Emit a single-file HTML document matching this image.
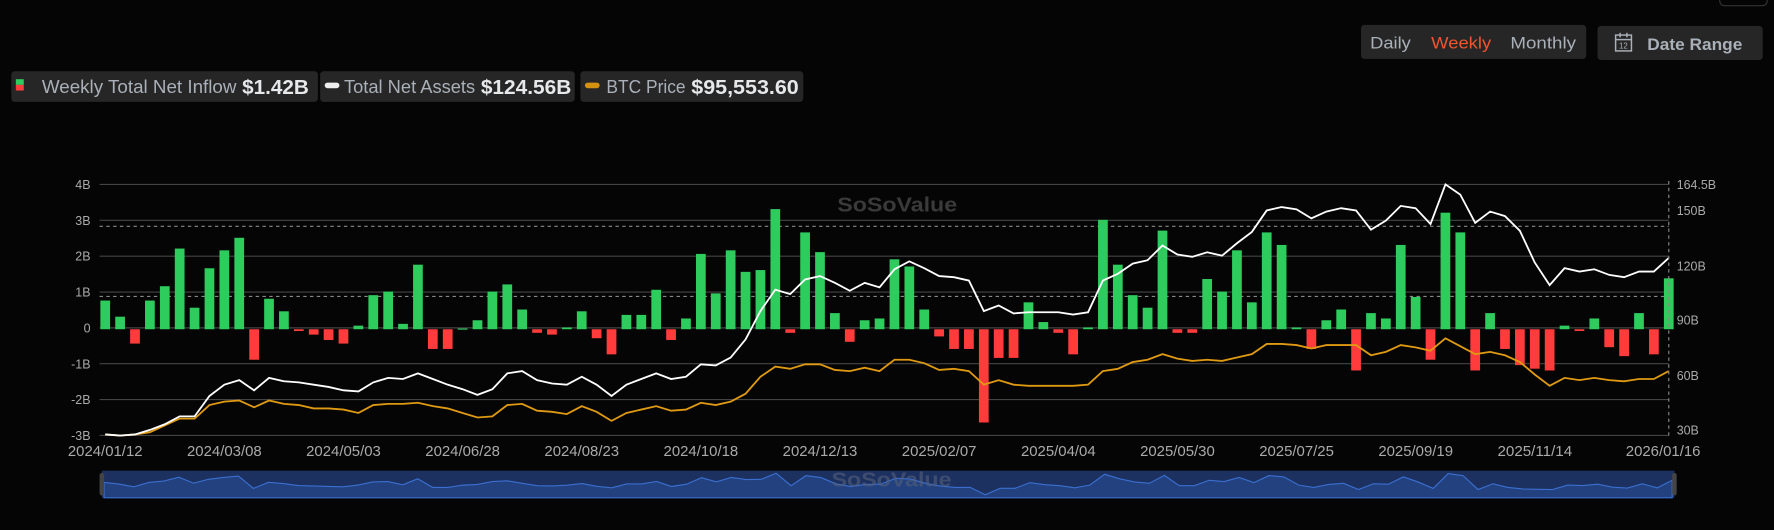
<!DOCTYPE html>
<html><head><meta charset="utf-8"><style>
html,body{margin:0;padding:0;background:#050505;width:1774px;height:530px;overflow:hidden}
svg{display:block}
text{font-family:"Liberation Sans",sans-serif}
</style></head><body>
<svg id="s" width="1774" height="530" viewBox="0 0 1568 468.45" xmlns="http://www.w3.org/2000/svg">
<rect width="1568" height="469" fill="#050505"/>
<rect x="1520" y="-10" width="42" height="15" rx="4" fill="none" stroke="#333"/>
<rect x="1203" y="22" width="199" height="30" rx="3" fill="#262626"/>
<text x="1211" y="43" font-size="15" fill="#aab0b8" textLength="36" lengthAdjust="spacingAndGlyphs">Daily</text>
<text x="1265" y="43" font-size="15" fill="#f2542d" textLength="53" lengthAdjust="spacingAndGlyphs">Weekly</text>
<text x="1335" y="43" font-size="15" fill="#aab0b8" textLength="58" lengthAdjust="spacingAndGlyphs">Monthly</text>
<rect x="1412" y="23" width="146" height="30" rx="3" fill="#262626"/>
<g stroke="#aab0b8" fill="none" stroke-width="1.3"><rect x="1428" y="31" width="14" height="14"/><line x1="1428" y1="35" x2="1442" y2="35"/><line x1="1432" y1="29" x2="1432" y2="33"/><line x1="1438" y1="29" x2="1438" y2="33"/></g>
<text x="1431" y="43" font-size="7" fill="#aab0b8">12</text>
<text x="1456" y="44" font-size="15" font-weight="bold" fill="#aab0b8" textLength="84" lengthAdjust="spacingAndGlyphs">Date Range</text>
<rect x="10" y="63" width="271" height="27" rx="3" fill="#262626"/>
<rect x="14" y="70" width="7" height="5" fill="#2dcc5c"/><rect x="14" y="75" width="7" height="5" fill="#ff3b3b"/>
<text x="37" y="82" font-size="16" fill="#aab0b8" textLength="172" lengthAdjust="spacingAndGlyphs">Weekly Total Net Inflow</text>
<text x="214" y="83" font-size="18" font-weight="bold" fill="#e6e8ea" textLength="59" lengthAdjust="spacingAndGlyphs">$1.42B</text>
<rect x="283" y="63" width="225" height="27" rx="3" fill="#262626"/>
<rect x="287" y="73" width="13" height="5" rx="2.5" fill="#eee"/>
<text x="304" y="82" font-size="16" fill="#aab0b8" textLength="116" lengthAdjust="spacingAndGlyphs">Total Net Assets</text>
<text x="425" y="83" font-size="18" font-weight="bold" fill="#e6e8ea" textLength="80" lengthAdjust="spacingAndGlyphs">$124.56B</text>
<rect x="513" y="63" width="197" height="27" rx="3" fill="#262626"/>
<rect x="517" y="73" width="13" height="5" rx="2.5" fill="#d4900f"/>
<text x="536" y="82" font-size="16" fill="#aab0b8" textLength="70" lengthAdjust="spacingAndGlyphs">BTC Price</text>
<text x="611" y="83" font-size="18" font-weight="bold" fill="#e6e8ea" textLength="95" lengthAdjust="spacingAndGlyphs">$95,553.60</text>
<g id="grid"></g>
<text x="740" y="187" font-size="18" font-weight="bold" fill="#3a3a3a" textLength="106" lengthAdjust="spacingAndGlyphs">SoSoValue</text>
<g id="bars"></g>
<polyline id="orange" fill="none" stroke="#e09a12" stroke-width="1.6"/>
<polyline id="white" fill="none" stroke="#ffffff" stroke-width="1.6"/>
<line x1="1475" y1="160" x2="1475" y2="386" stroke="#888" stroke-dasharray="3,3"/>
<rect x="90" y="416" width="1390" height="24" fill="#1d3160"/>
<polygon id="nav" fill="#22417e" stroke="#3a6fd0" stroke-width="1"/>
<text x="735" y="430" font-size="18" font-weight="bold" fill="#55607a" opacity=".6" textLength="106" lengthAdjust="spacingAndGlyphs">SoSoValue</text>
<rect x="88" y="418" width="4" height="20" rx="2" fill="#444"/>
<rect x="1478" y="418" width="4" height="20" rx="2" fill="#444"/>
</svg>
<script>
var NS="http://www.w3.org/2000/svg",s=document.getElementById('s');
function el(p,t,a,txt){var e=document.createElementNS(NS,t);for(var k in a)e.setAttribute(k,a[k]);if(txt)e.textContent=txt;p.appendChild(e);return e;}
var g=document.getElementById('grid');
var yl=["4B","3B","2B","1B","0","-1B","-2B","-3B"];
for(var i=0;i<8;i++){var y=163+i*31.7;el(g,'line',{x1:88,x2:1475,y1:y,y2:y,stroke:'#444','stroke-width':1});el(g,'text',{x:80,y:y+4,'font-size':11,fill:'#aaa','text-anchor':'end'},yl[i]);}
el(g,'line',{x1:88,x2:1475,y1:200,y2:200,stroke:'#888','stroke-dasharray':'3,3'});
el(g,'line',{x1:88,x2:1475,y1:262,y2:262,stroke:'#888','stroke-dasharray':'3,3'});
var rl=[["164.5B",163],["150B",186],["120B",235],["90B",283],["60B",332],["30B",380]];
rl.forEach(function(r){el(g,'text',{x:1482,y:r[1]+4,'font-size':11,fill:'#aaa'},r[0]);});
var xl=["2024/01/12","2024/03/08","2024/05/03","2024/06/28","2024/08/23","2024/10/18","2024/12/13","2025/02/07","2025/04/04","2025/05/30","2025/07/25","2025/09/19","2025/11/14","2026/01/16"];
xl.forEach(function(t,i){var x=i<13?93+i*105.3:1470;el(g,'text',{x:x,y:403,'font-size':13,fill:'#aaa','text-anchor':'middle',textLength:66,lengthAdjust:'spacingAndGlyphs'},t);});
var v=[0.8,0.35,-0.4,0.8,1.2,2.25,0.6,1.7,2.2,2.55,-0.85,0.85,0.5,-0.05,-0.15,-0.3,-0.4,0.1,0.95,1.05,0.15,1.8,-0.55,-0.55,0.02,0.25,1.05,1.25,0.55,-0.1,-0.15,0.05,0.5,-0.25,-0.7,0.4,0.4,1.1,-0.3,0.3,2.1,1.0,2.2,1.6,1.65,3.35,-0.1,2.7,2.15,0.45,-0.35,0.25,0.3,1.95,1.75,0.55,-0.2,-0.55,-0.55,-2.6,-0.8,-0.8,0.75,0.2,-0.1,-0.7,0.05,3.05,1.8,0.95,0.6,2.75,-0.1,-0.1,1.4,1.05,2.2,0.75,2.7,2.35,0.05,-0.55,0.25,0.55,-1.15,0.45,0.3,2.35,0.9,-0.85,3.25,2.7,-1.15,0.45,-0.55,-1.0,-1.1,-1.15,0.1,-0.05,0.3,-0.5,-0.75,0.45,-0.7,1.42];
var b=document.getElementById('bars'),step=(1475-93)/(v.length-1);
v.forEach(function(a,i){var x=93+i*step,h=Math.abs(a)*31.7;el(b,'rect',{x:x-4.3,y:a>=0?291-h:291,width:8.6,height:Math.max(h,1),fill:a>=0?'#2dcc5c':'#ff3b3b'});});
var W=[384,385,384,380,375,368,368,350,340,336,345,334,337,338,340,342,345,346,338,334,335,330,335,340,344,349,344,330,328,336,339,340,333,340,350,340,335,330,335,333,322,323,316,300,275,256,260,247,244,250,257,250,254,238,231,237,244,245,248,275,270,277,276,276,276,278,276,248,242,233,230,217,225,227,223,226,215,205,186,183,185,193,187,184,186,203,195,182,184,198,163,172,197,187,191,204,232,252,237,240,238,243,245,240,240,228];
var O=[384,385,384,382,376,370,370,358,355,354,360,354,357,358,361,361,362,365,358,357,357,356,359,361,365,369,368,358,357,363,364,366,359,364,372,365,362,359,363,362,356,358,355,348,333,324,326,322,322,327,328,325,328,318,318,321,327,326,328,340,336,340,341,341,341,341,340,328,326,320,318,313,317,319,318,319,316,313,304,304,305,308,305,305,305,314,311,305,307,310,299,306,313,311,314,320,331,341,334,336,334,336,337,335,335,328];
function pts(a){var st=(1475-93)/(a.length-1);return a.map(function(y,i){return (93+i*st).toFixed(1)+','+y;}).join(' ');}
document.getElementById('white').setAttribute('points',pts(W));
document.getElementById('orange').setAttribute('points',pts(O));
var st=(1478-92)/(v.length-1),p=[];
v.forEach(function(a,i){p.push((92+i*st).toFixed(1)+','+(429-a*3.2).toFixed(1));});
p.push('1478,440','92,440');
document.getElementById('nav').setAttribute('points',p.join(' '));
</script>
</body></html>
